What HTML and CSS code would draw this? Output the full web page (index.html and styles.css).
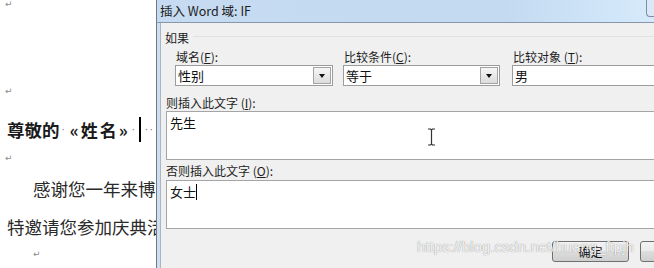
FILE: index.html
```html
<!DOCTYPE html>
<html lang="zh-CN">
<head>
    <meta charset="UTF-8">
    <title>插入 Word 域: IF</title>
    <link rel="stylesheet" href="styles.css">
</head>
<body>
    <div class="screen">
        <div class="doc">
            <div class="line l1"><span class="ret">↵</span></div>
            <div class="line l2"><span class="ret">↵</span></div>
            <div class="line l3">
                <span class="greet">尊敬的</span><span class="dot">·</span><span class="merge">«姓名»</span><span class="dot">·</span><span class="doc-cursor"></span><span class="dot">··</span>
            </div>
            <div class="line l4"><span class="ret">↵</span></div>
            <div class="line l5">感谢您一年来博</div>
            <div class="line l6">特邀请您参加庆典活</div>
            <div class="line l7"><span class="ret">↵</span></div>
        </div>

        <div class="dialog">
            <div class="titlebar">
                <span class="title">插入 Word 域: IF</span>
                <span class="close-edge"></span>
            </div>
            <div class="frame">
                <div class="panel">
                    <div class="group-head">
                        <span>如果</span>
                        <span class="group-line"></span>
                    </div>
                    <div class="cond-grid">
                        <label class="lbl">域名(<u>F</u>):</label>
                        <label class="lbl">比较条件(<u>C</u>):</label>
                        <label class="lbl lbl-obj">比较对象 (<u>T</u>):</label>
                        <div class="combo">
                            <span class="val">性别</span>
                            <span class="drop"><span class="tri"></span></span>
                        </div>
                        <div class="combo combo-2">
                            <span class="val">等于</span>
                            <span class="drop"><span class="tri"></span></span>
                        </div>
                        <div class="combo text-input">
                            <span class="val">男</span>
                        </div>
                    </div>

                    <label class="area-label">则插入此文字 (<u>I</u>):</label>
                    <div class="area">先生</div>

                    <label class="area-label area-label-2">否则插入此文字 (<u>O</u>):</label>
                    <div class="area area-2">女士<span class="caret"></span></div>

                    <div class="buttons">
                        <button class="btn">确定</button>
                        <button class="btn"></button>
                    </div>
                </div>
            </div>

            <!-- mouse pointer over the first text box -->
            <svg class="ibeam" width="9" height="18" viewBox="0 0 9 18">
                <path d="M1 1 H3.5 L4.5 2 L5.5 1 H8 M4.5 2 V16 M1 17 H3.5 L4.5 16 L5.5 17 H8" fill="none" stroke="#333" stroke-width="1.2"/>
            </svg>
            <div class="watermark">https://blog.csdn.net/huang_ftpjh</div>
        </div>
    </div>
</body>
</html>
```

FILE: styles.css
```css
body {
    margin: 0;
    width: 654px;
    height: 268px;
    overflow: hidden;
    background: #fff;
    font-family: "Noto Sans CJK SC", sans-serif;
}

.screen {
    display: flex;
    height: 268px;
}

/* Word document on the left */
.doc {
    width: 156px;
    flex-shrink: 0;
    overflow: hidden;
    white-space: nowrap;
    color: #2a2a2a;
    font-size: 17.5px;
}

.line {
    display: flex;
    align-items: center;
}

.ret {
    font-family: "DejaVu Sans", sans-serif;
    font-size: 9px;
    color: #8c8c8c;
}

.l1 { height: 8px; padding-left: 5px; }
.l2 { height: 7px; margin-top: 79px; padding-left: 5px; }
.l3 { height: 34px; margin-top: 18px; padding-left: 7px; }
.l4 { height: 24px; padding-left: 5px; }
.l5 { height: 36px; padding-left: 33px; }
.l6 { height: 40px; padding-left: 7px; }
.l7 { height: 16px; padding-left: 33px; }

.greet, .merge {
    font-weight: 700;
    color: #1a1a1a;
}

.merge {
    font-size: 17px;
    letter-spacing: 2px;
    margin-left: 2px;
}

.dot {
    font-family: "DejaVu Sans", sans-serif;
    color: #777;
    font-size: 10px;
    letter-spacing: 2px;
    margin: 0 1px 0 2px;
}

.doc-cursor {
    display: inline-block;
    width: 2px;
    height: 25px;
    background: #000;
    margin: 0 2px 0 1px;
}

/* dialog window */
.dialog {
    width: 498px;
    flex-shrink: 0;
    position: relative;
    overflow: hidden;
    display: flex;
    flex-direction: column;
}

.titlebar {
    height: 23px;
    box-sizing: border-box;
    display: flex;
    align-items: center;
    padding-left: 3px;
    border-left: 1px solid #6f7a86;
    border-bottom: 1px solid #8796a8;
    background: linear-gradient(to right, #c6dbf1 0%, #c3daf1 70%, #d6eafb 100%);
}

.title {
    font-size: 12.5px;
    color: #1c1c1c;
    margin-top: -2px;
}

.close-edge {
    margin-left: auto;
    align-self: flex-start;
    width: 8px;
    height: 17px;
    box-sizing: border-box;
    border: 1px solid #7f8c9b;
    border-top: none;
    border-right: none;
    border-radius: 0 0 0 4px;
    background: #dbe9f6;
}

.frame {
    flex: 1;
    display: flex;
    border-left: 1px solid #6f7a86;
    background: #d0dff0;
    padding-left: 3px;
}

.panel {
    width: 560px;
    flex-shrink: 0;
    background: #f0f0f0;
    border-left: 1px solid #aab6c3;
    padding-left: 4px;
    font-size: 12px;
    color: #1e1e1e;
}

.group-head {
    display: flex;
    padding-top: 7px;
    line-height: 16px;
}

.group-line {
    flex: 1;
    height: 1px;
    margin-top: 6px;
    margin-left: 4px;
    background: #e2e2e2;
}

.cond-grid {
    display: grid;
    grid-template-columns: 168px 169px 1fr;
    margin-left: 10px;
    margin-top: 3px;
}

.lbl {
    line-height: 16px;
    padding-left: 1px;
}

.combo {
    display: flex;
    width: 158px;
    height: 21px;
    box-sizing: border-box;
    border: 1px solid #9c9c9c;
    background: #fff;
}

.combo-2 {
    width: 157px;
}

.text-input {
    width: 200px;
}

.combo .val {
    flex: 1;
    padding-left: 2px;
    font-size: 13px;
    line-height: 19px;
    color: #111;
}

.drop {
    width: 16px;
    margin: 1px;
    border: 1px solid #a3a3a3;
    background: linear-gradient(#f6f6f6, #dcdcdc);
    display: flex;
    align-items: center;
    justify-content: center;
}

.tri {
    width: 0;
    height: 0;
    border-left: 3.5px solid transparent;
    border-right: 3.5px solid transparent;
    border-top: 4px solid #111;
}

.area-label {
    display: block;
    margin-left: 1px;
    margin-top: 9px;
    line-height: 16px;
}

.area-label-2 {
    margin-top: 3px;
}

.area {
    margin-left: 1px;
    height: 49px;
    box-sizing: border-box;
    border: 1px solid #a5a5a5;
    background: #fff;
    padding: 3px 3px;
    font-size: 13px;
    line-height: 16px;
    color: #111;
}

.area-2 {
    margin-top: 1px;
}

.caret {
    display: inline-block;
    width: 1px;
    height: 16px;
    background: #000;
    vertical-align: top;
}

.buttons {
    display: flex;
    gap: 11px;
    margin-top: 12px;
    margin-left: 387px;
}

.btn {
    width: 77px;
    height: 21px;
    padding: 0;
    border: 1px solid #707070;
    border-radius: 3px;
    background: linear-gradient(#f3f3f3 0%, #ebebeb 50%, #dddddd 50%, #cfcfcf 100%);
    font-family: "Noto Sans CJK SC", sans-serif;
    font-size: 12px;
    color: #111;
}

.ibeam {
    position: absolute;
    left: 271px;
    top: 128px;
}

.watermark {
    position: absolute;
    left: 261px;
    top: 238px;
    font-family: "Liberation Sans", sans-serif;
    font-size: 15px;
    color: rgba(255, 255, 255, 0.9);
    text-shadow: 0 0 1px rgba(0, 0, 0, 0.5);
    white-space: nowrap;
}
```
